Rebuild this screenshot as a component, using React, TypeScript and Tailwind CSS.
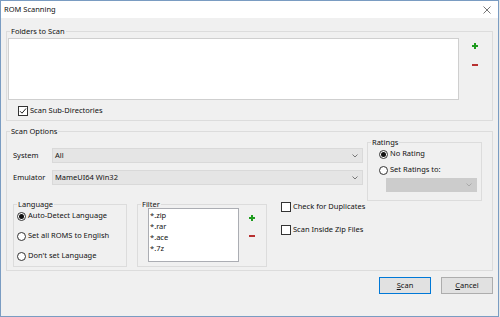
import type { ReactNode } from "react";

const Plus = () => (
  <svg width="6" height="6" viewBox="0 0 6 6">
    <path d="M2 0h2v2h2v2H4v2H2V4H0V2h2z" fill="#1e9b1e" />
  </svg>
);

const Minus = () => (
  <svg width="6" height="2" viewBox="0 0 6 2">
    <rect width="6" height="2" fill="#b83030" />
  </svg>
);

const Radio = ({ checked }: { checked?: boolean }) => (
  <span className="flex h-[9px] w-[9px] shrink-0 items-center justify-center rounded-full border border-[#333] bg-white">
    {checked && <span className="h-[5px] w-[5px] rounded-full bg-[#111]" />}
  </span>
);

const Check = ({ checked }: { checked?: boolean }) => (
  <span className="flex h-[10px] w-[10px] shrink-0 items-center justify-center border border-[#333] bg-white">
    {checked && (
      <svg width="8" height="8" viewBox="0 0 8 8">
        <path d="M1 4.2l2 2L7 1.5" stroke="#222" strokeWidth="1" fill="none" />
      </svg>
    )}
  </span>
);

const Select = ({ value, disabled, className }: { value?: string; disabled?: boolean; className: string }) => (
  <div
    className={`flex items-center justify-between border pl-[2px] pr-[4px] ${
      disabled ? "border-[#cccccc] bg-[#cccccc]" : "border-[#d9d9d9] bg-[#e5e5e5]"
    } ${className}`}
  >
    <span>{value}</span>
    <svg width="6" height="4" viewBox="0 0 6 4">
      <path d="M0.5 0.5L3 3l2.5-2.5" stroke={disabled ? "#aaa" : "#777"} fill="none" />
    </svg>
  </div>
);

const Group = ({ title, className, children }: { title: string; className: string; children: ReactNode }) => (
  <fieldset className={`border border-[#dcdcdc] ${className}`}>
    <legend className="ml-[3px] px-[1px] leading-[10px]">{title}</legend>
    {children}
  </fieldset>
);

export default function App() {
  return (
    <div className="h-[317px] w-[500px] overflow-hidden whitespace-nowrap bg-[#e8e8e8] font-['Noto_Sans',sans-serif] text-[7.5px] text-[#111]">
      <div className="flex h-[317px] w-[499px] flex-col border border-[#7a9cc2] bg-[#f0f0f0]">
        {/* title bar */}
        <div className="flex h-[17px] shrink-0 items-center justify-between bg-white pl-[3px] pr-[7px]">
          <span>ROM Scanning</span>
          <svg width="8" height="8" viewBox="0 0 8 8">
            <path d="M0.5 0.5l7 7M7.5 0.5l-7 7" stroke="#666" strokeWidth="0.9" />
          </svg>
        </div>

        <div className="flex flex-1 flex-col pl-[5px] pr-[5px] pt-[8px]">
          <Group title="Folders to Scan" className="h-[95px]">
            <div className="flex">
              <div className="ml-[1px] mt-[2px] h-[62px] w-[451px] border border-[#cfcfcf] bg-white" />
              <div className="ml-[13px] flex flex-col gap-[15px] pt-[7px]">
                <Plus />
                <Minus />
              </div>
            </div>
            <label className="mt-[5px] flex items-center gap-[2px] pl-[11px]">
              <Check checked />
              <span>Scan Sub-Directories</span>
            </label>
          </Group>

          <Group title="Scan Options" className="mt-[5px] h-[145px]">
            <div className="flex">
              <div className="flex w-[356px] shrink-0 flex-col">
                <div className="mt-[12px] flex h-[15px] items-center pl-[6px]">
                  <span className="w-[39px]">System</span>
                  <Select value="All" className="h-[15px] w-[311px]" />
                </div>
                <div className="mt-[7px] flex h-[15px] items-center pl-[6px]">
                  <span className="w-[39px]">Emulator</span>
                  <Select value="MameUI64 Win32" className="h-[15px] w-[311px]" />
                </div>

                <div className="mt-[14px] flex pl-[6px]">
                  <Group title="Language" className="h-[68px] w-[114px] shrink-0">
                    <div className="mt-[2px] flex flex-col gap-[10px] pl-[3px]">
                      <label className="flex h-[10px] items-center gap-[2px]">
                        <Radio checked />
                        <span>Auto-Detect Language</span>
                      </label>
                      <label className="flex h-[10px] items-center gap-[2px]">
                        <Radio />
                        <span>Set all ROMS to English</span>
                      </label>
                      <label className="flex h-[10px] items-center gap-[2px]">
                        <Radio />
                        <span>Don't set Language</span>
                      </label>
                    </div>
                  </Group>

                  <Group title="Filter" className="ml-[10px] h-[68px] w-[130px] shrink-0">
                    <div className="flex">
                      <div className="ml-[10px] mt-[-1px] h-[54px] w-[91px] border border-[#abadb3] bg-white pl-[1px] pt-[1px] leading-[11px]">
                        <div>*.zip</div>
                        <div>*.rar</div>
                        <div>*.ace</div>
                        <div>*.7z</div>
                      </div>
                      <div className="ml-[10px] flex flex-col gap-[14px] pt-[6px]">
                        <Plus />
                        <Minus />
                      </div>
                    </div>
                  </Group>

                  <div className="ml-[14px] flex shrink-0 flex-col pt-[3px]">
                    <label className="flex h-[10px] items-center gap-[2px]">
                      <Check />
                      <span>Check for Duplicates</span>
                    </label>
                    <label className="mt-[13px] flex h-[10px] items-center gap-[2px]">
                      <Check />
                      <span>Scan Inside Zip Files</span>
                    </label>
                  </div>
                </div>
              </div>

              <Group title="Ratings" className="ml-[4px] mt-[1px] h-[64px] w-[115px] shrink-0">
                <div className="flex flex-col pl-[11px]">
                  <label className="mt-[2px] flex h-[10px] items-center gap-[2px]">
                    <Radio checked />
                    <span>No Rating</span>
                  </label>
                  <label className="mt-[6px] flex h-[10px] items-center gap-[2px]">
                    <Radio />
                    <span>Set Ratings to:</span>
                  </label>
                  <Select disabled className="ml-[7px] mt-[3px] h-[14px] w-[91px]" />
                </div>
              </Group>
            </div>
          </Group>

          <div className="mt-[6px] flex justify-end gap-[10px]">
            <button className="flex h-[17px] w-[52px] items-center justify-center border border-[#0078d7] bg-[#e1e1e1]">
              <span>
                <span className="underline">S</span>can
              </span>
            </button>
            <button className="flex h-[17px] w-[52px] items-center justify-center border border-[#adadad] bg-[#e1e1e1]">
              <span>
                <span className="underline">C</span>ancel
              </span>
            </button>
          </div>
        </div>
      </div>
    </div>
  );
}
